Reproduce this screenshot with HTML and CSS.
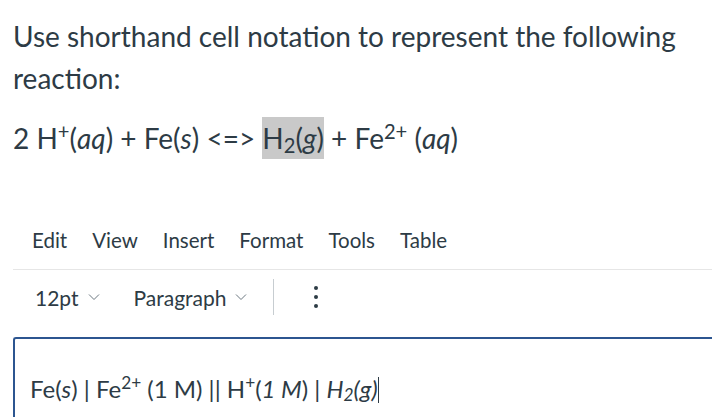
FILE: index.html
```html
<!DOCTYPE html>
<html>
<head>
<meta charset="utf-8">
<link rel="stylesheet" href="styles.css">
</head>
<body>
<div class="page">
  <div class="question">
    <p class="prompt">Use shorthand cell notation to represent the following reaction:</p>
    <p class="equation">2 H<sup>+</sup>(<i>aq</i>) + Fe(<i>s</i>) &lt;=&gt; <span class="hl">H<sub>2</sub>(<i>g</i>)</span> + Fe<sup>2+</sup> (<i>aq</i>)</p>
  </div>
  <div class="editor-wrap">
    <div class="menubar">
      <span>Edit</span><span>View</span><span>Insert</span><span>Format</span><span>Tools</span><span>Table</span>
    </div>
    <div class="toolbar">
      <span class="dd">12pt <svg class="chev" viewBox="0 0 12 8"><path d="M1 1.5 L6 6.5 L11 1.5" fill="none" stroke="#6b7780" stroke-width="1"/></svg></span>
      <span class="dd para">Paragraph <svg class="chev" viewBox="0 0 12 8"><path d="M1 1.5 L6 6.5 L11 1.5" fill="none" stroke="#6b7780" stroke-width="1"/></svg></span>
      <span class="sep"></span>
      <span class="more"><i></i><i></i><i></i></span>
    </div>
    <div class="content">
      <p>Fe(<i>s</i>) | Fe<sup>2+</sup> (1 M) || H<sup>+</sup>(<i>1 M</i>) | <i>H<sub>2</sub>(g)</i><span class="caret"></span></p>
    </div>
  </div>
</div>
</body>
</html>
```
FILE: styles.css
```css
html, body {
  margin: 0;
  padding: 0;
  background: #ffffff;
}
body {
  font-family: Lato, "Open Sans", sans-serif;
  color: #2d3b45;
  width: 712px;
  height: 417px;
  overflow: hidden;
}
.page {
  padding-left: 13px;
}
.question p {
  margin: 0;
}
.prompt {
  font-size: 28px;
  line-height: 42px;
  padding-top: 15px;
  width: 699px;
}
.question .equation {
  font-size: 28px;
  line-height: 40px;
  margin-top: 19px;
}
.equation sup {
  font-size: 0.72em;
  line-height: 0;
  vertical-align: 0.5em;
}
.equation sub, .content sub {
  font-size: 0.72em;
  line-height: 0;
  vertical-align: -0.2em;
}
.hl {
  background: #c9c9c9;
  padding: 4px 0;
}
.editor-wrap {
  margin-top: 70px;
}
.menubar {
  display: flex;
  gap: 25px;
  padding-left: 19px;
  font-size: 20.5px;
  line-height: 24px;
  height: 41px;
  border-bottom: 1px solid #e6e6e6;
}
.toolbar {
  display: flex;
  align-items: center;
  height: 54px;
  margin-bottom: 13px;
  padding-left: 22px;
  font-size: 21px;
}
.dd {
  display: flex;
  align-items: center;
  gap: 9px;
}
.para {
  margin-left: 34px;
}
.chev {
  width: 12px;
  height: 8px;
}
.sep {
  width: 1px;
  height: 36px;
  background: #c7cdd1;
  margin-left: 26px;
}
.more {
  display: flex;
  flex-direction: column;
  gap: 5px;
  margin-left: 40px;
}
.more i {
  width: 4px;
  height: 4px;
  border-radius: 50%;
  background: #2d3b45;
}
.content {
  border-top: 2px solid #2c5590;
  border-left: 2px solid #2c5590;
  border-top-left-radius: 3px;
  height: 43px;
  padding-left: 15px;
  padding-top: 35px;
}
.content p {
  margin: 0;
  font-size: 24px;
  line-height: 30px;
}
.content sup {
  font-size: 0.72em;
  line-height: 0;
  vertical-align: 0.5em;
}
.caret {
  display: inline-block;
  width: 1px;
  height: 26px;
  background: #2d3b45;
  vertical-align: -5px;
}
```
